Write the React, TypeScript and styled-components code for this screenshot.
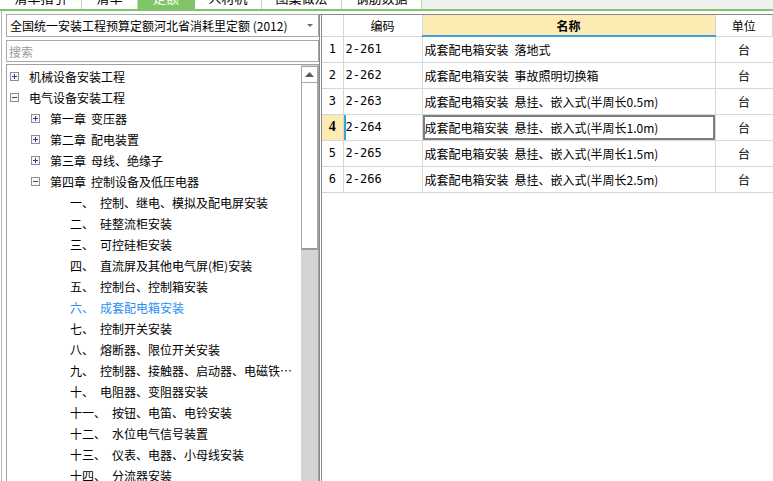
import styled, { createGlobalStyle } from "styled-components";

const GlobalStyle = createGlobalStyle`
  html, body {
    margin: 0;
    padding: 0;
    background: #ffffff;
  }
  body {
    font-family: "Noto Sans CJK SC", "Liberation Sans", sans-serif;
    font-size: 12px;
    color: #000;
  }
`;

const Page = styled.div`
  width: 773px;
  height: 481px;
  overflow: hidden;
  display: flex;
  flex-direction: column;
  background: #fff;
`;

const TabStrip = styled.div`
  height: 9px;
  flex-shrink: 0;
  display: flex;
  align-items: flex-end;
  overflow: hidden;
  background: #f0f0f0;
  border-bottom: 2px solid #7ec56b;
`;

const Tab = styled.div<{ $w: number; $active?: boolean }>`
  flex-shrink: 0;
  width: ${(p) => p.$w}px;
  height: 22px;
  line-height: 22px;
  text-align: center;
  font-size: 13px;
  box-sizing: border-box;
  border-right: 1px solid ${(p) => (p.$active ? "#7ec56b" : "#b9dcad")};
  background: ${(p) => (p.$active ? "#80c468" : "#ffffff")};
  color: ${(p) => (p.$active ? "#ffffff" : "#000")};
`;

const Body = styled.div`
  flex: 1;
  display: flex;
  min-height: 0;
`;

const LeftPanel = styled.div`
  flex-shrink: 0;
  width: 313px;
  margin-left: 1px;
  border-left: 1px solid #b4b4b4;
  padding: 3px 0 0 4px;
  display: flex;
  flex-direction: column;
`;

const Combo = styled.div`
  height: 23px;
  box-sizing: border-box;
  border: 1px solid #a7a7a7;
  display: flex;
  align-items: center;
  padding-left: 3px;
  font-size: 12px;
  white-space: nowrap;
`;

const ComboText = styled.span`
  flex: 1;
`;

const ComboArrow = styled.span`
  width: 0;
  height: 0;
  margin-right: 5px;
  border-left: 3px solid transparent;
  border-right: 3px solid transparent;
  border-top: 3px solid #6a6a72;
`;

const SearchBox = styled.div`
  margin-top: 3px;
  height: 22px;
  box-sizing: border-box;
  border: 1px solid #a7a7a7;
  display: flex;
  align-items: center;
  padding-left: 2px;
  color: #9a9a9a;
  font-size: 12px;
`;

const TreeBox = styled.div`
  margin-top: 2px;
  flex: 1;
  min-height: 0;
  border: 1px solid #a0a0a0;
  border-bottom: none;
  display: flex;
`;

const TreeList = styled.div`
  flex: 1;
  min-width: 0;
  padding-top: 1px;
  overflow: hidden;
`;

const TreeRow = styled.div<{ $indent: number; $selected?: boolean }>`
  height: 21px;
  display: flex;
  align-items: center;
  padding-left: ${(p) => p.$indent}px;
  white-space: nowrap;
  color: ${(p) => (p.$selected ? "#2b8ff2" : "#000")};
`;

const ExpanderIcon = styled.svg`
  width: 9px;
  height: 9px;
  flex-shrink: 0;
  margin-right: 10px;
`;

const Label = styled.span`
  flex: 1;
  min-width: 0;
  overflow: hidden;
  text-overflow: ellipsis;
  white-space: nowrap;
`;

const Prefix = styled.span<{ $gap: number }>`
  margin-right: ${(p) => p.$gap}px;
`;

const ScrollBar = styled.div`
  width: 17px;
  flex-shrink: 0;
  display: flex;
  flex-direction: column;
  padding-top: 1px;
  background: #d4d4d4;
`;

const ScrollButton = styled.div`
  height: 17px;
  box-sizing: border-box;
  border: 1px solid #a6a6a6;
  background: #ffffff;
  display: flex;
  align-items: center;
  justify-content: center;
`;

const ScrollThumb = styled.div`
  height: 167px;
  box-sizing: border-box;
  border: 1px solid #a6a6a6;
  border-top: none;
  border-bottom: 2px solid #9a9a9a;
  background: #ffffff;
`;

const RightPanel = styled.div`
  flex: 1;
  min-width: 0;
  margin-top: 3px;
  border-top: 1px solid #8a8a8a;
  border-left: 3px double #8a8a8a;
`;

const Grid = styled.table`
  width: 100%;
  table-layout: fixed;
  border-collapse: collapse;
  font-size: 12px;
`;

const HeadCell = styled.th<{ $accent?: boolean }>`
  height: 21px;
  padding: 0;
  font-weight: ${(p) => (p.$accent ? "bold" : "normal")};
  text-align: center;
  background: ${(p) => (p.$accent ? "#fdebb4" : "#ffffff")};
  border-right: 1px solid #d6d6d6;
  border-bottom: ${(p) => (p.$accent ? "2px solid #39a2d8" : "1px solid #d6d6d6")};
  box-sizing: border-box;
`;

const NumCell = styled.td<{ $current?: boolean }>`
  height: 25px;
  padding: 0;
  text-align: center;
  font-family: ${(p) =>
    p.$current ? '"Liberation Serif", serif' : '"DejaVu Sans Mono", monospace'};
  font-size: ${(p) => (p.$current ? "14px" : "12px")};
  font-weight: ${(p) => (p.$current ? "bold" : "normal")};
  background: ${(p) => (p.$current ? "#fdebb4" : "#ffffff")};
  border-right: 1px solid #d6d6d6;
  border-bottom: 1px solid #d6d6d6;
`;

const CodeCell = styled.td<{ $current?: boolean }>`
  padding: 0 0 0 2px;
  font-family: "DejaVu Sans Mono", monospace;
  font-size: 12px;
  border-right: 1px solid #d6d6d6;
  border-bottom: 1px solid #d6d6d6;
  box-shadow: ${(p) => (p.$current ? "inset 2px 0 0 #39a2d8" : "none")};
`;

const NameCell = styled.td<{ $focused?: boolean }>`
  padding: 0 0 0 2px;
  white-space: nowrap;
  overflow: hidden;
  border-right: 1px solid #d6d6d6;
  border-bottom: 1px solid #d6d6d6;
  box-shadow: ${(p) => (p.$focused ? "inset 0 0 0 2px #7d7d7d" : "none")};
`;

const UnitCell = styled.td`
  padding: 0;
  text-align: center;
  border-bottom: 1px solid #d6d6d6;
`;

function Expander({ open }: { open: boolean }) {
  return (
    <ExpanderIcon viewBox="0 0 9 9">
      <rect x="0.5" y="0.5" width="8" height="8" fill="#f7f7f7" stroke="#8e8e8e" />
      <rect x="2" y="4" width="5" height="1" fill="#2a468f" />
      {!open && <rect x="4" y="2" width="1" height="5" fill="#2a468f" />}
    </ExpanderIcon>
  );
}

type Node = {
  level: number;
  open?: boolean;
  prefix?: string;
  title: string;
  selected?: boolean;
};

const nodes: Node[] = [
  { level: 0, open: false, title: "机械设备安装工程" },
  { level: 0, open: true, title: "电气设备安装工程" },
  { level: 1, open: false, prefix: "第一章", title: "变压器" },
  { level: 1, open: false, prefix: "第二章", title: "配电装置" },
  { level: 1, open: false, prefix: "第三章", title: "母线、绝缘子" },
  { level: 1, open: true, prefix: "第四章", title: "控制设备及低压电器" },
  { level: 2, prefix: "一、", title: "控制、继电、模拟及配电屏安装" },
  { level: 2, prefix: "二、", title: "硅整流柜安装" },
  { level: 2, prefix: "三、", title: "可控硅柜安装" },
  { level: 2, prefix: "四、", title: "直流屏及其他电气屏(柜)安装" },
  { level: 2, prefix: "五、", title: "控制台、控制箱安装" },
  { level: 2, prefix: "六、", title: "成套配电箱安装", selected: true },
  { level: 2, prefix: "七、", title: "控制开关安装" },
  { level: 2, prefix: "八、", title: "熔断器、限位开关安装" },
  { level: 2, prefix: "九、", title: "控制器、接触器、启动器、电磁铁及其他低压电器安装" },
  { level: 2, prefix: "十、", title: "电阻器、变阻器安装" },
  { level: 2, prefix: "十一、", title: "按钮、电笛、电铃安装" },
  { level: 2, prefix: "十二、", title: "水位电气信号装置" },
  { level: 2, prefix: "十三、", title: "仪表、电器、小母线安装" },
  { level: 2, prefix: "十四、", title: "分流器安装" },
];

const indents = [3, 24, 63];

const tabs = [
  { name: "清单指引", w: 82 },
  { name: "清单", w: 56 },
  { name: "定额", w: 57, active: true },
  { name: "人材机", w: 67 },
  { name: "图集做法", w: 80 },
  { name: "钢筋数据", w: 80 },
];

const rows = [
  { code: "2-261", name: "成套配电箱安装\u2002落地式" },
  { code: "2-262", name: "成套配电箱安装\u2002事故照明切换箱" },
  { code: "2-263", name: "成套配电箱安装\u2002悬挂、嵌入式(半周长0.5m)" },
  { code: "2-264", name: "成套配电箱安装\u2002悬挂、嵌入式(半周长1.0m)" },
  { code: "2-265", name: "成套配电箱安装\u2002悬挂、嵌入式(半周长1.5m)" },
  { code: "2-266", name: "成套配电箱安装\u2002悬挂、嵌入式(半周长2.5m)" },
];

export default function App() {
  const current = 3;
  return (
    <>
      <GlobalStyle />
      <Page>
        <TabStrip>
          {tabs.map((t) => (
            <Tab key={t.name} $w={t.w} $active={t.active}>
              {t.name}
            </Tab>
          ))}
        </TabStrip>
        <Body>
          <LeftPanel>
            <Combo>
              <ComboText>全国统一安装工程预算定额河北省消耗里定额 (2012)</ComboText>
              <ComboArrow />
            </Combo>
            <SearchBox>搜索</SearchBox>
            <TreeBox>
              <TreeList>
                {nodes.map((n, i) => (
                  <TreeRow key={i} $indent={indents[n.level]} $selected={n.selected}>
                    {n.level < 2 && <Expander open={!!n.open} />}
                    <Label>
                      {n.prefix && <Prefix $gap={n.level === 1 ? 5 : 6}>{n.prefix}</Prefix>}
                      {n.title}
                    </Label>
                  </TreeRow>
                ))}
              </TreeList>
              <ScrollBar>
                <ScrollButton>
                  <svg width="9" height="5" viewBox="0 0 9 5">
                    <path d="M0 5 L4.5 0 L9 5 Z" fill="#5a5a60" />
                  </svg>
                </ScrollButton>
                <ScrollThumb />
              </ScrollBar>
            </TreeBox>
          </LeftPanel>
          <RightPanel>
            <Grid>
              <colgroup>
                <col style={{ width: 21 }} />
                <col style={{ width: 79 }} />
                <col style={{ width: 293 }} />
                <col />
              </colgroup>
              <thead>
                <tr>
                  <HeadCell />
                  <HeadCell>编码</HeadCell>
                  <HeadCell $accent>名称</HeadCell>
                  <HeadCell>单位</HeadCell>
                </tr>
              </thead>
              <tbody>
                {rows.map((r, i) => (
                  <tr key={r.code}>
                    <NumCell $current={i === current}>{i + 1}</NumCell>
                    <CodeCell $current={i === current}>{r.code}</CodeCell>
                    <NameCell $focused={i === current}>{r.name}</NameCell>
                    <UnitCell>台</UnitCell>
                  </tr>
                ))}
              </tbody>
            </Grid>
          </RightPanel>
        </Body>
      </Page>
    </>
  );
}
